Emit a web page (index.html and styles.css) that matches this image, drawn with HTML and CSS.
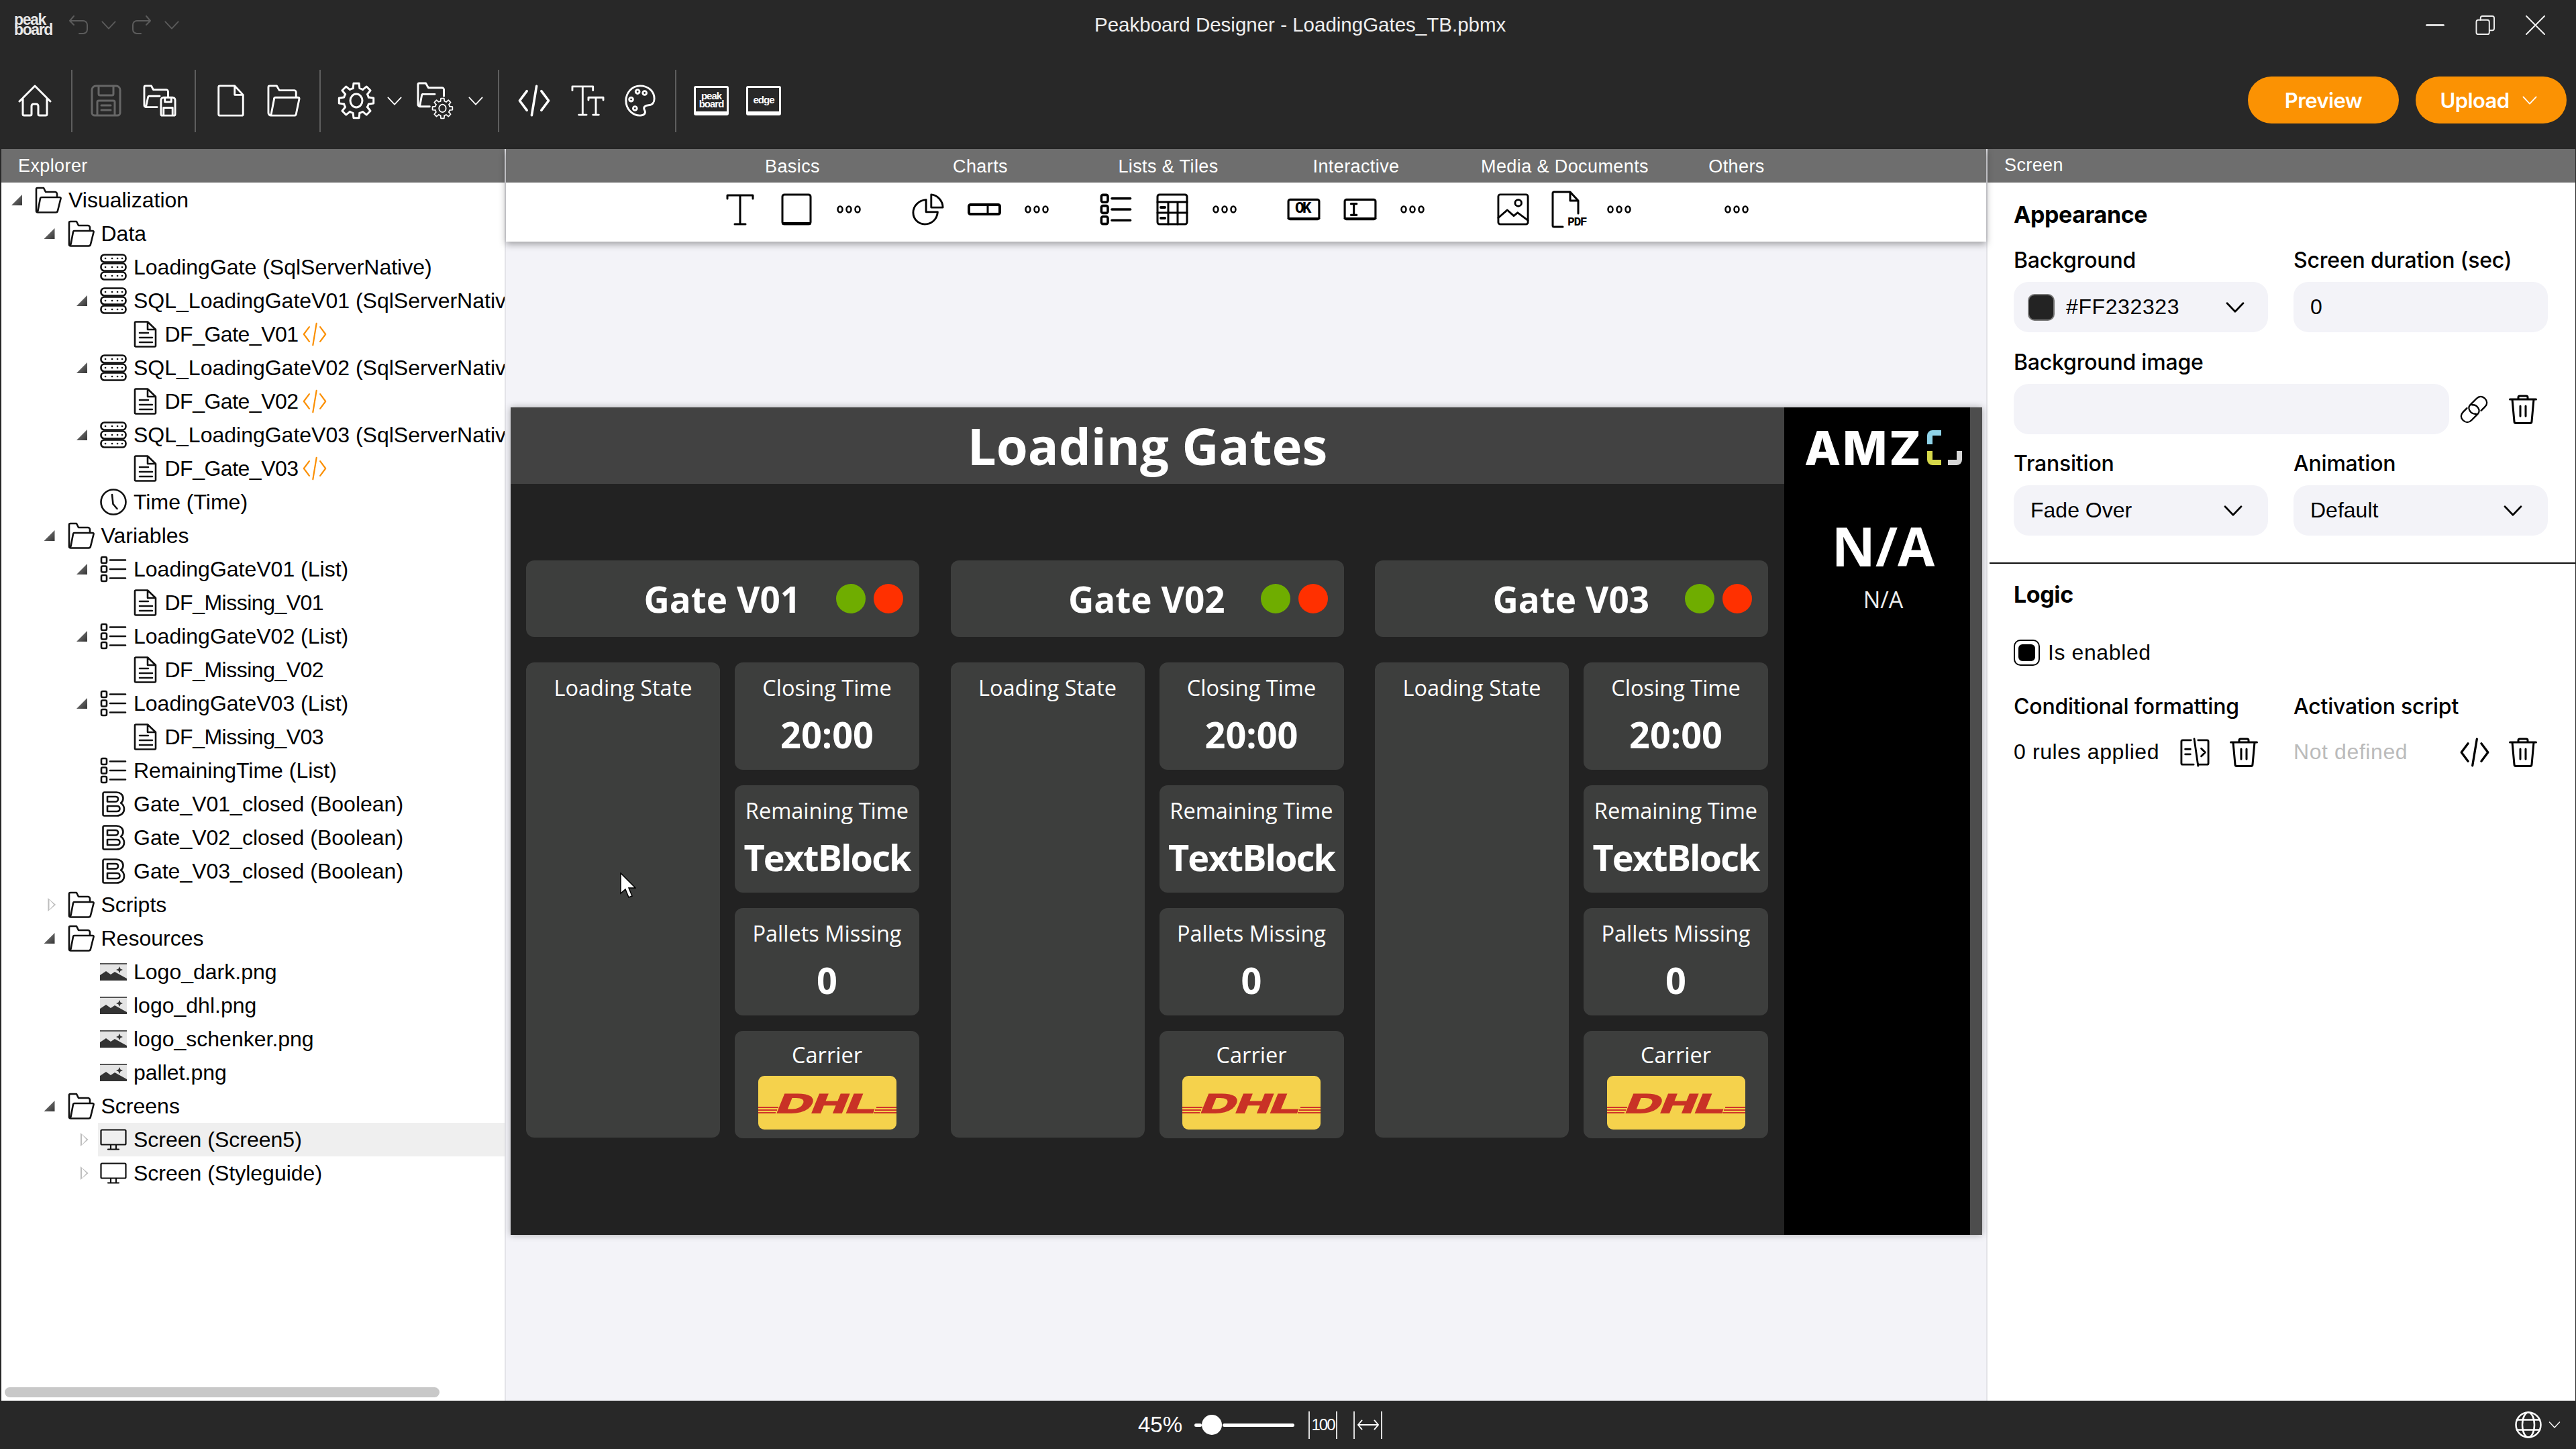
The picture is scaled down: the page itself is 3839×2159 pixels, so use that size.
FILE: index.html
```html
<!DOCTYPE html>
<html lang="en">
<head>
<meta charset="utf-8">
<title>Peakboard Designer</title>
<link rel="stylesheet" href="styles.css">
</head>
<body>
<svg class="defs" width="0" height="0">
  <defs>
    <symbol id="folder" viewBox="0 0 40 40"><path d="M2 36V4a2 2 0 0 1 2-2h9l3 6h14a3 3 0 0 1 3 3v5M2 36a2.500 2.500 0 0 0 2.500 2.500H31a3 3 0 0 0 3-2.500l4.500-18a1.500 1.500 0 0 0-1.500-2H10a2 2 0 0 0-2 1.500L4.500 36"/></symbol>
    <symbol id="db" viewBox="0 0 40 40"><rect x="1.500" y="1.500" width="37" height="11" rx="5"/><rect x="1.500" y="14.500" width="37" height="11" rx="5"/><rect x="1.500" y="27.500" width="37" height="11" rx="5"/><path d="M8 7h.1M18 7h.1M26 7h.1M33 7h.1M8 20h.1M18 20h.1M26 20h.1M33 20h.1M8 33h.1M18 33h.1M26 33h.1M33 33h.1"/></symbol>
    <symbol id="file" viewBox="0 0 40 40"><path d="M5 3a1.500 1.500 0 0 1 1.500-1.500H24L36 13v24a1.500 1.500 0 0 1-1.500 1.500h-28A1.500 1.500 0 0 1 5 37zM24 1.500V13h12M12 18h13M12 25h19M12 32h19"/></symbol>
    <symbol id="clock" viewBox="0 0 40 40"><circle cx="20" cy="20" r="18.500"/><path d="M18 9l1.500 14 6 7"/></symbol>
    <symbol id="list" viewBox="0 0 40 40"><rect x="2" y="2" width="8" height="9" rx="2"/><rect x="2" y="15.500" width="8" height="9" rx="2"/><rect x="2" y="29" width="8" height="9" rx="2"/><path d="M15 6.500h23M15 20h23M15 33.500h23"/></symbol>
    <symbol id="bool" viewBox="0 0 40 40"><path d="M6.500 2.500a2 2 0 0 0-2 2v31a2 2 0 0 0 2 2H25c6 0 11-4 11-10 0-4-2-7-5-9 2-1.500 3.500-4 3.500-7 0-5.500-4.500-9-10-9zM11 9h12c2.500 0 4 1.500 4 3.500S25.500 16.500 23 16.500H11zM11 23h14c3 0 4.500 1.500 4.500 4S28 31 25 31H11z"/></symbol>
    <symbol id="image" viewBox="0 0 40 26"><rect width="40" height="26" fill="#e4e4e4" stroke="none"/><rect width="40" height="2" fill="#555" stroke="none"/><path d="M0 26V18l9-6 7 5 6-4 18 10v3z" fill="#333" stroke="none"/><path d="M29 5l1.500 3.500L34 10l-3.500 1.500L29 15l-1.500-3.500L24 10l3.500-1.500z" fill="#333" stroke="none"/></symbol>
    <symbol id="monitor" viewBox="0 0 40 32"><rect x="1.500" y="1.500" width="37" height="22" rx="1.500"/><path d="M16 24v6M24 24v6M12 30.500h16"/></symbol>
    <symbol id="code" viewBox="0 0 40 40"><path d="M11 8L2 20l9 12M29 8l9 12-9 12M23 2l-6 36"/></symbol>
    <symbol id="chev" viewBox="0 0 24 14"><path d="M1.500 1.500L12 12.500 22.500 1.500"/></symbol>
    <symbol id="home" viewBox="0 0 50 48"><path d="M2 25L25 2l23 23M7 20v24a2 2 0 0 0 2 2h9a2 2 0 0 0 2-2V32a3 3 0 0 1 3-3h4a3 3 0 0 1 3 3v12a2 2 0 0 0 2 2h9a2 2 0 0 0 2-2V20"/></symbol>
    <symbol id="save" viewBox="0 0 46 48"><path d="M2 8a6 6 0 0 1 6-6h30a6 6 0 0 1 6 6v34a4 4 0 0 1-4 4H6a4 4 0 0 1-4-4zM12 2v12a2 2 0 0 0 2 2h18a2 2 0 0 0 2-2V2M10 46V26a2 2 0 0 1 2-2h22a2 2 0 0 1 2 2v20M16 31h14M16 38h14"/></symbol>
    <symbol id="fsave" viewBox="0 0 52 50"><path d="M22 35H5a3 3 0 0 1-3-3V4a2 2 0 0 1 2-2h9l3 6h20a3 3 0 0 1 3 3v9M5 33l3-14a2 2 0 0 1 2-1h16M32 20h14a4 4 0 0 1 4 4v22a2 2 0 0 1-2 2H30a2 2 0 0 1-2-2V24a4 4 0 0 1 4-4zM34 20v7h10v-7M32 48V36h14v12"/></symbol>
    <symbol id="newfile" viewBox="0 0 42 50"><path d="M2 4a2 2 0 0 1 2-2h23l13 14v30a2 2 0 0 1-2 2H4a2 2 0 0 1-2-2zM27 2v14h13"/></symbol>
    <symbol id="open" viewBox="0 0 52 50"><path d="M2 44V4a2 2 0 0 1 2-2h11l4 7h23a3 3 0 0 1 3 3v8M2 44a4 4 0 0 0 4 4h36a3 3 0 0 0 3-2l5-24a2 2 0 0 0-2-2H13a2 2 0 0 0-2 2L6 48"/></symbol>
    <path id="tooth" d="M23.100 9.650L23.930 2.300H32.070L32.900 9.650A19 19 0 0 1 37.500 11.550"/>
    <g id="cog">
      <use href="#tooth"/><use href="#tooth" transform="rotate(45 28 28)"/><use href="#tooth" transform="rotate(90 28 28)"/><use href="#tooth" transform="rotate(135 28 28)"/><use href="#tooth" transform="rotate(180 28 28)"/><use href="#tooth" transform="rotate(225 28 28)"/><use href="#tooth" transform="rotate(270 28 28)"/><use href="#tooth" transform="rotate(315 28 28)"/>
      <ellipse cx="28" cy="28" rx="9" ry="10"/>
    </g>
    <symbol id="gear" viewBox="0 0 56 56"><use href="#cog"/></symbol>
    <symbol id="fgear" viewBox="0 0 58 58"><path d="M20 38H5a3 3 0 0 1-3-3V4a2 2 0 0 1 2-2h10l4 7h21a3 3 0 0 1 3 3v10M5 36l3-16a2 2 0 0 1 2-1h18"/><use href="#cog" transform="translate(23 24) scale(.6)"/></symbol>
    <symbol id="tt" viewBox="0 0 52 50"><path d="M2 9V3h32v6M18 3v44M12 47h12M27 24v-4h23v4M38.500 20v27M34 47h9"/></symbol>
    <symbol id="palette" viewBox="0 0 48 50"><path d="M24 2C11 2 2 13 2 25c0 13 10 23 22 23 7 0 9-4 7-8-3-5 1-8 6-8 6 0 9-4 9-10C46 10 36 2 24 2z"/><circle cx="20" cy="11" r="3"/><circle cx="31" cy="13" r="3"/><circle cx="10" cy="23" r="3"/><circle cx="16" cy="37" r="3"/></symbol>
    <symbol id="undo" viewBox="0 0 30 28"><path d="M8 1L2 8l6 6M2 8h20a6 6 0 0 1 6 6v7a6 6 0 0 1-6 6h-6"/></symbol>
    <symbol id="redo" viewBox="0 0 30 28"><path d="M22 1l6 7-6 6M28 8H8a6 6 0 0 0-6 6v7a6 6 0 0 0 6 6h6"/></symbol>
    <symbol id="t-big" viewBox="0 0 42 48"><path d="M2 8V3h38v5M21 3v43M13 46h16"/></symbol>
    <symbol id="rect" viewBox="0 0 46 48"><path d="M2 5a3 3 0 0 1 3-3h36a3 3 0 0 1 3 3v38a3 3 0 0 1-3 3H5a3 3 0 0 1-3-3z"/><path d="M3 45h40" stroke-width="4"/></symbol>
    <symbol id="dots" viewBox="0 0 36 12"><ellipse cx="5" cy="6" rx="3.500" ry="4.500"/><ellipse cx="18" cy="6" rx="3.500" ry="4.500"/><ellipse cx="31" cy="6" rx="3.500" ry="4.500"/></symbol>
    <symbol id="pie" viewBox="0 0 50 50"><path d="M22 10C10 11 2 20 2 30c0 10 8 18 18 18 10 0 19-7 20-19H22z"/><path d="M30 2c10 1 18 10 18 20H30z"/></symbol>
    <symbol id="toggle" viewBox="0 0 50 18"><rect x="2" y="2" width="46" height="14" rx="2.500" stroke-width="4"/><path d="M30 2v14"/></symbol>
    <symbol id="table" viewBox="0 0 48 48"><rect x="2" y="2" width="44" height="44" rx="3"/><path d="M2 13h44M2 29h44M18 13v33M32 13v33"/><path d="M7 21h6M7 37h6" stroke-width="4"/></symbol>
    <symbol id="okbox" viewBox="0 0 48 32"><rect x="2" y="2" width="44" height="28" rx="2.500"/><path d="M2 29h44" stroke-width="3"/></symbol>
    <symbol id="inbox" viewBox="0 0 48 32"><rect x="2" y="2" width="44" height="28" rx="2.500"/><path d="M2 29h44" stroke-width="3"/><path d="M11 8h8M15 8v16M11 24h8" stroke-width="3"/></symbol>
    <symbol id="picture" viewBox="0 0 50 50"><rect x="2" y="2" width="46" height="46" rx="3"/><circle cx="33" cy="15" r="5"/><path d="M2 38l14-12 10 9 6-5 16 12"/></symbol>
    <symbol id="pdf" viewBox="0 0 50 56"><path d="M17 54H4a2 2 0 0 1-2-2V4a2 2 0 0 1 2-2h24l12 13v19M28 2v13h12"/></symbol>
    <symbol id="link" viewBox="0 0 46 46"><path d="M20 16a10 10 0 0 1 9 4c3 4 2 8 0 10L19 40c-4 4-9 4-13 0s-4-9 0-13l6-6M26 30a10 10 0 0 1-9-4c-3-4-2-8 0-10L27 6c4-4 9-4 13 0s4 9 0 13l-6 6"/></symbol>
    <symbol id="trash" viewBox="0 0 42 44"><path d="M1.500 7h39M14 7V4a2 2 0 0 1 2-2h10a2 2 0 0 1 2 2v3M5 7l3 33a2.500 2.500 0 0 0 2.500 2.500h21A2.500 2.500 0 0 0 34 40l3-33M17 17v15M25 17v15"/></symbol>
    <symbol id="rules" viewBox="0 0 46 44"><path d="M17 3H4a2 2 0 0 0-2 2v34a2 2 0 0 0 2 2h17M28 3h14a2 2 0 0 1 2 2v34a2 2 0 0 1-2 2H29M22 1l6 42M8 17h8M8 25h8M33 16l6 6-6 6"/></symbol>
    <symbol id="globe" viewBox="0 0 40 40"><circle cx="20" cy="20" r="18.500"/><ellipse cx="20" cy="20" rx="9" ry="18.500"/><path d="M3 12.500h34M3 27.500h34"/></symbol>
    <symbol id="arrows" viewBox="0 0 36 20"><path d="M8 3l-6 7 6 7M2 10h32M28 3l6 7-6 7"/></symbol>
    <symbol id="restore" viewBox="0 0 30 30"><rect x="1.500" y="7" width="20" height="22" rx="3"/><path d="M8 7V4a3 3 0 0 1 3-3h15a3 3 0 0 1 3 3v16a3 3 0 0 1-3 3h-4"/></symbol>
    <symbol id="close" viewBox="0 0 28 28"><path d="M1 1l26 26M27 1L1 27"/></symbol>
  </defs>
</svg>

<div class="app">
  <header class="titlebar">
    <div class="tb-left">
      <div class="logo">peak<br>board</div>
      <svg class="ic muted undo"><use href="#undo"/></svg>
      <svg class="ic muted mini"><use href="#chev"/></svg>
      <svg class="ic muted undo"><use href="#redo"/></svg>
      <svg class="ic muted mini"><use href="#chev"/></svg>
    </div>
    <div class="doc-title">Peakboard Designer - LoadingGates_TB.pbmx</div>
    <div class="win-controls">
      <span class="win-min"></span>
      <svg class="ic win-ic"><use href="#restore"/></svg>
      <svg class="ic win-ic thin"><use href="#close"/></svg>
    </div>
  </header>

  <div class="toolbar">
    <div class="tools">
      <svg class="ic t48"><use href="#home"/></svg>
      <i class="sep"></i>
      <svg class="ic t48 dim"><use href="#save"/></svg>
      <svg class="ic t48"><use href="#fsave"/></svg>
      <i class="sep"></i>
      <svg class="ic t48"><use href="#newfile"/></svg>
      <svg class="ic t48"><use href="#open"/></svg>
      <i class="sep"></i>
      <svg class="ic t56"><use href="#gear"/></svg>
      <svg class="ic mini thin"><use href="#chev"/></svg>
      <svg class="ic t56"><use href="#fgear"/></svg>
      <svg class="ic mini thin"><use href="#chev"/></svg>
      <i class="sep"></i>
      <svg class="ic t48"><use href="#code"/></svg>
      <svg class="ic t48"><use href="#tt"/></svg>
      <svg class="ic t48"><use href="#palette"/></svg>
      <i class="sep"></i>
      <div class="brandbox">peak<br>board</div>
      <div class="brandbox">edge</div>
    </div>
    <div class="actions">
      <div class="pill">Preview</div>
      <div class="pill upload">Upload<svg class="ic pill-chev"><use href="#chev"/></svg></div>
    </div>
  </div>

  <main class="main">
    <aside class="explorer">
      <div class="band">Explorer</div>
      <div class="tree">
        <div class="row l0"><i class="tri open"></i><div class="cell"><svg class="ic ti"><use href="#folder"/></svg><span>Visualization</span></div></div>
        <div class="row l1"><i class="tri open"></i><div class="cell"><svg class="ic ti"><use href="#folder"/></svg><span>Data</span></div></div>
        <div class="row l2"><i class="tri none"></i><div class="cell"><svg class="ic ti"><use href="#db"/></svg><span>LoadingGate (SqlServerNative)</span></div></div>
        <div class="row l2"><i class="tri open"></i><div class="cell"><svg class="ic ti"><use href="#db"/></svg><span>SQL_LoadingGateV01 (SqlServerNative)</span></div></div>
        <div class="row l3"><i class="tri none"></i><div class="cell"><svg class="ic ti"><use href="#file"/></svg><span>DF_Gate_V01</span><svg class="ic tag"><use href="#code"/></svg></div></div>
        <div class="row l2"><i class="tri open"></i><div class="cell"><svg class="ic ti"><use href="#db"/></svg><span>SQL_LoadingGateV02 (SqlServerNative)</span></div></div>
        <div class="row l3"><i class="tri none"></i><div class="cell"><svg class="ic ti"><use href="#file"/></svg><span>DF_Gate_V02</span><svg class="ic tag"><use href="#code"/></svg></div></div>
        <div class="row l2"><i class="tri open"></i><div class="cell"><svg class="ic ti"><use href="#db"/></svg><span>SQL_LoadingGateV03 (SqlServerNative)</span></div></div>
        <div class="row l3"><i class="tri none"></i><div class="cell"><svg class="ic ti"><use href="#file"/></svg><span>DF_Gate_V03</span><svg class="ic tag"><use href="#code"/></svg></div></div>
        <div class="row l2"><i class="tri none"></i><div class="cell"><svg class="ic ti"><use href="#clock"/></svg><span>Time (Time)</span></div></div>
        <div class="row l1"><i class="tri open"></i><div class="cell"><svg class="ic ti"><use href="#folder"/></svg><span>Variables</span></div></div>
        <div class="row l2"><i class="tri open"></i><div class="cell"><svg class="ic ti"><use href="#list"/></svg><span>LoadingGateV01 (List)</span></div></div>
        <div class="row l3"><i class="tri none"></i><div class="cell"><svg class="ic ti"><use href="#file"/></svg><span>DF_Missing_V01</span></div></div>
        <div class="row l2"><i class="tri open"></i><div class="cell"><svg class="ic ti"><use href="#list"/></svg><span>LoadingGateV02 (List)</span></div></div>
        <div class="row l3"><i class="tri none"></i><div class="cell"><svg class="ic ti"><use href="#file"/></svg><span>DF_Missing_V02</span></div></div>
        <div class="row l2"><i class="tri open"></i><div class="cell"><svg class="ic ti"><use href="#list"/></svg><span>LoadingGateV03 (List)</span></div></div>
        <div class="row l3"><i class="tri none"></i><div class="cell"><svg class="ic ti"><use href="#file"/></svg><span>DF_Missing_V03</span></div></div>
        <div class="row l2"><i class="tri none"></i><div class="cell"><svg class="ic ti"><use href="#list"/></svg><span>RemainingTime (List)</span></div></div>
        <div class="row l2"><i class="tri none"></i><div class="cell"><svg class="ic ti"><use href="#bool"/></svg><span>Gate_V01_closed (Boolean)</span></div></div>
        <div class="row l2"><i class="tri none"></i><div class="cell"><svg class="ic ti"><use href="#bool"/></svg><span>Gate_V02_closed (Boolean)</span></div></div>
        <div class="row l2"><i class="tri none"></i><div class="cell"><svg class="ic ti"><use href="#bool"/></svg><span>Gate_V03_closed (Boolean)</span></div></div>
        <div class="row l1"><i class="tri shut"></i><div class="cell"><svg class="ic ti"><use href="#folder"/></svg><span>Scripts</span></div></div>
        <div class="row l1"><i class="tri open"></i><div class="cell"><svg class="ic ti"><use href="#folder"/></svg><span>Resources</span></div></div>
        <div class="row l2"><i class="tri none"></i><div class="cell"><svg class="ic ti-img"><use href="#image"/></svg><span>Logo_dark.png</span></div></div>
        <div class="row l2"><i class="tri none"></i><div class="cell"><svg class="ic ti-img"><use href="#image"/></svg><span>logo_dhl.png</span></div></div>
        <div class="row l2"><i class="tri none"></i><div class="cell"><svg class="ic ti-img"><use href="#image"/></svg><span>logo_schenker.png</span></div></div>
        <div class="row l2"><i class="tri none"></i><div class="cell"><svg class="ic ti-img"><use href="#image"/></svg><span>pallet.png</span></div></div>
        <div class="row l1"><i class="tri open"></i><div class="cell"><svg class="ic ti"><use href="#folder"/></svg><span>Screens</span></div></div>
        <div class="row l2"><i class="tri shut"></i><div class="cell selected"><svg class="ic ti-mon"><use href="#monitor"/></svg><span>Screen (Screen5)</span></div></div>
        <div class="row l2"><i class="tri shut"></i><div class="cell"><svg class="ic ti-mon"><use href="#monitor"/></svg><span>Screen (Styleguide)</span></div></div>
      </div>
      <div class="hscroll"><div class="hthumb"></div></div>
    </aside>

    <section class="center">
      <div class="toolbox">
        <div class="tgroup g1">
          <div class="tg-title">Basics</div>
          <div class="tg-items">
            <svg class="ic bx"><use href="#t-big"/></svg>
            <svg class="ic bx"><use href="#rect"/></svg>
            <svg class="ic bdots"><use href="#dots"/></svg>
          </div>
        </div>
        <div class="tgroup">
          <div class="tg-title">Charts</div>
          <div class="tg-items">
            <svg class="ic bx"><use href="#pie"/></svg>
            <div class="bxwrap"><svg class="ic small-box"><use href="#toggle"/></svg></div>
            <svg class="ic bdots"><use href="#dots"/></svg>
          </div>
        </div>
        <div class="tgroup">
          <div class="tg-title">Lists &amp; Tiles</div>
          <div class="tg-items">
            <svg class="ic bx"><use href="#list"/></svg>
            <svg class="ic bx"><use href="#table"/></svg>
            <svg class="ic bdots"><use href="#dots"/></svg>
          </div>
        </div>
        <div class="tgroup">
          <div class="tg-title">Interactive</div>
          <div class="tg-items">
            <div class="bxwrap"><svg class="ic small-box"><use href="#okbox"/></svg><span class="oktext">OK</span></div>
            <div class="bxwrap"><svg class="ic small-box"><use href="#inbox"/></svg></div>
            <svg class="ic bdots"><use href="#dots"/></svg>
          </div>
        </div>
        <div class="tgroup media">
          <div class="tg-title">Media &amp; Documents</div>
          <div class="tg-items">
            <svg class="ic bx"><use href="#picture"/></svg>
            <div class="bxwrap"><svg class="ic pdf-ic"><use href="#pdf"/></svg><span class="pdftext">PDF</span></div>
            <svg class="ic bdots"><use href="#dots"/></svg>
          </div>
        </div>
        <div class="tgroup others">
          <div class="tg-title">Others</div>
          <div class="tg-items">
            <svg class="ic bdots"><use href="#dots"/></svg>
          </div>
        </div>
      </div>

      <div class="canvas">
        <div class="screen">
          <div class="board">
            <div class="board-title">Loading Gates</div>
            <div class="gates">
              <div class="gate">
                <div class="gate-head"><span class="gate-name">Gate V01</span><i class="dot green"></i><i class="dot red"></i></div>
                <div class="gate-body">
                  <div class="card tall"><div class="c-label">Loading State</div></div>
                  <div class="stack">
                    <div class="card"><div class="c-label">Closing Time</div><div class="c-value">20:00</div></div>
                    <div class="card"><div class="c-label">Remaining Time</div><div class="c-value tight">TextBlock</div></div>
                    <div class="card"><div class="c-label">Pallets Missing</div><div class="c-value">0</div></div>
                    <div class="card"><div class="c-label small">Carrier</div><svg class="dhl" viewBox="0 0 206 80"><rect width="206" height="80" rx="9" fill="#f5d24c"/><path d="M0 47h30M0 51h28M0 55h26M176 47h30M174 51h32M172 55h34" stroke="#d0352a" stroke-width="2"/><text x="0" y="55" transform="skewX(-22) translate(47 0)" textLength="147" lengthAdjust="spacingAndGlyphs" class="dhl-text">DHL</text></svg></div>
                  </div>
                </div>
              </div>
              <div class="gate">
                <div class="gate-head"><span class="gate-name">Gate V02</span><i class="dot green"></i><i class="dot red"></i></div>
                <div class="gate-body">
                  <div class="card tall"><div class="c-label">Loading State</div></div>
                  <div class="stack">
                    <div class="card"><div class="c-label">Closing Time</div><div class="c-value">20:00</div></div>
                    <div class="card"><div class="c-label">Remaining Time</div><div class="c-value tight">TextBlock</div></div>
                    <div class="card"><div class="c-label">Pallets Missing</div><div class="c-value">0</div></div>
                    <div class="card"><div class="c-label small">Carrier</div><svg class="dhl" viewBox="0 0 206 80"><rect width="206" height="80" rx="9" fill="#f5d24c"/><path d="M0 47h30M0 51h28M0 55h26M176 47h30M174 51h32M172 55h34" stroke="#d0352a" stroke-width="2"/><text x="0" y="55" transform="skewX(-22) translate(47 0)" textLength="147" lengthAdjust="spacingAndGlyphs" class="dhl-text">DHL</text></svg></div>
                  </div>
                </div>
              </div>
              <div class="gate">
                <div class="gate-head"><span class="gate-name">Gate V03</span><i class="dot green"></i><i class="dot red"></i></div>
                <div class="gate-body">
                  <div class="card tall"><div class="c-label">Loading State</div></div>
                  <div class="stack">
                    <div class="card"><div class="c-label">Closing Time</div><div class="c-value">20:00</div></div>
                    <div class="card"><div class="c-label">Remaining Time</div><div class="c-value tight">TextBlock</div></div>
                    <div class="card"><div class="c-label">Pallets Missing</div><div class="c-value">0</div></div>
                    <div class="card"><div class="c-label small">Carrier</div><svg class="dhl" viewBox="0 0 206 80"><rect width="206" height="80" rx="9" fill="#f5d24c"/><path d="M0 47h30M0 51h28M0 55h26M176 47h30M174 51h32M172 55h34" stroke="#d0352a" stroke-width="2"/><text x="0" y="55" transform="skewX(-22) translate(47 0)" textLength="147" lengthAdjust="spacingAndGlyphs" class="dhl-text">DHL</text></svg></div>
                  </div>
                </div>
              </div>
            </div>
          </div>
          <div class="side">
            <div class="amz"><span>AMZ</span><svg class="amz-mark" viewBox="0 0 52 52"><path d="M21 0H8a8 8 0 0 0-8 8v13h8V8h13z" fill="#8fd3e8"/><path d="M0 31v13a8 8 0 0 0 8 8h13v-8H8V31z" fill="#d6d84a"/><path d="M52 31v13a8 8 0 0 1-8 8H31v-8h13V31z" fill="#d6d6d6"/></svg></div>
            <div class="na-big">N/A</div>
            <div class="na-small">N/A</div>
            <div class="side-strip"></div>
          </div>
          <svg class="cursor" viewBox="0 0 24 38"><path d="M1 1v30l7-6 5 12 5-2-5-12h10z" fill="#fff" stroke="#000" stroke-width="1.500"/></svg>
        </div>
      </div>
    </section>

    <aside class="props">
      <div class="band props-band">Screen</div>
      <div class="pane">
        <h2 class="sec-title">Appearance</h2>
        <div class="two">
          <div><div class="f-label">Background</div>
            <div class="input swatch-input"><i class="swatch"></i><span class="grow spaced">#FF232323</span><svg class="ic sel-chev wide"><use href="#chev"/></svg></div></div>
          <div><div class="f-label">Screen duration (sec)</div><div class="input">0</div></div>
        </div>
        <div class="f-label after">Background image</div>
        <div class="img-row">
          <div class="input flex1"></div>
          <svg class="ic act link"><use href="#link"/></svg>
          <svg class="ic act trash"><use href="#trash"/></svg>
        </div>
        <div class="two top24">
          <div><div class="f-label">Transition</div><div class="input"><span class="grow">Fade Over</span><svg class="ic sel-chev"><use href="#chev"/></svg></div></div>
          <div><div class="f-label">Animation</div><div class="input"><span class="grow">Default</span><svg class="ic sel-chev"><use href="#chev"/></svg></div></div>
        </div>
      </div>
      <div class="divider"></div>
      <div class="pane logic">
        <h2 class="sec-title">Logic</h2>
        <div class="check-row"><i class="check"></i><span class="spaced">Is enabled</span></div>
        <div class="two cond">
          <div><div class="f-label">Conditional formatting</div>
            <div class="plain"><span class="grow spaced">0 rules applied</span><svg class="ic act rules"><use href="#rules"/></svg><svg class="ic act trash"><use href="#trash"/></svg></div></div>
          <div><div class="f-label">Activation script</div>
            <div class="plain"><span class="grow spaced muted-text">Not defined</span><svg class="ic act codeic"><use href="#code"/></svg><svg class="ic act trash"><use href="#trash"/></svg></div></div>
        </div>
      </div>
    </aside>
  </main>

  <footer class="status">
    <span class="zoom-val">45%</span>
    <div class="slider"><i class="seg short"></i><i class="thumb"></i><i class="seg"></i></div>
    <div class="bars">100</div>
    <div class="bars"><svg class="ic arrows"><use href="#arrows"/></svg></div>
    <div class="lang"><svg class="ic globe"><use href="#globe"/></svg><svg class="ic mini thin"><use href="#chev"/></svg></div>
  </footer>
</div>
</body>
</html>
```

FILE: styles.css
```css
* { box-sizing: border-box; }
html, body { margin: 0; padding: 0; background: #282828; }
body { font-family: "Liberation Sans", Arial, sans-serif; font-size: 32px; color: #000; }
.defs { position: absolute; }
.app { width: 3839px; height: 2159px; display: flex; flex-direction: column; overflow: hidden; background: #282828; }
.ic { fill: none; stroke: currentColor; stroke-width: 3; stroke-linecap: round; stroke-linejoin: round; display: block; flex: none; }
.thin { stroke-width: 2; }

/* title bar */
.titlebar { height: 74px; display: flex; align-items: center; color: #fff; }
.tb-left { width: 1631px; display: flex; align-items: center; padding-left: 21px; }
.logo { font-weight: 700; font-size: 23px; line-height: 15px; letter-spacing: -1.400px; width: 81px; color: #e8e8e8; }
.muted { color: #5c5c5c; stroke-width: 2; }
.undo { width: 30px; height: 28px; margin-right: 19px; }
.mini { width: 22px; height: 13px; }
.tb-left .mini { margin-right: 23px; }
.doc-title { font-size: 29.500px; color: #eee; white-space: nowrap; }
.win-controls { margin-left: auto; display: flex; align-items: center; gap: 46px; padding-right: 46px; }
.win-min { width: 28px; height: 3px; background: #ddd; border-radius: 2px; }
.win-ic { width: 29px; height: 29px; stroke-width: 2; color: #eee; }

/* tool bar */
.toolbar { height: 148px; display: flex; color: #fff; align-items: stretch; }
.tools { display: grid; grid-template-columns: 104px 6px 96px 64px 41px 66px 92px 16px 92px 22px 100px 20px 48px 58px 102px 54px 52px 54px 102px; justify-items: center; align-items: center; height: 110px; align-self: flex-start; margin-top: 21px; }
.t48 { width: 50px; height: 48px; }
.t56 { width: 56px; height: 56px; }
.dim { color: #666; }
.sep { display: block; width: 2px; height: 93px; background: #5e5e5e; }
.brandbox { width: 52px; height: 44px; border: 3px solid #fff; border-bottom-width: 6px; border-radius: 3px; font-weight: 700; font-size: 15px; line-height: 12px; letter-spacing: -1px; display: flex; align-items: center; justify-content: center; text-align: center; color: #fff; }
.actions { margin-left: auto; display: flex; gap: 25px; padding: 40px 14px 0 0; }
.pill { width: 225px; height: 70px; border-radius: 35px; background: #fb9203; color: #fff; font-family: Inter, sans-serif; font-weight: 600; font-size: 31px; letter-spacing: -.6px; display: flex; align-items: center; justify-content: center; }
.upload { padding-right: 8px; }
.pill-chev { width: 22px; height: 13px; margin-left: 19px; stroke-width: 2; }

/* main */
.main { flex: 1; display: flex; padding-left: 2px; padding-right: 1px; min-height: 0; }
.band { height: 50px; background: #6e6e6e; color: #fff; font-size: 27px; line-height: 50px; padding-left: 25px; letter-spacing: .4px; }

/* explorer */
.explorer { width: 752px; background: #fff; display: flex; flex-direction: column; flex: none; border-right: 2px solid #e3e3e8; }
.tree { flex: 1; padding-top: 1px; overflow: hidden; }
.row { height: 50px; display: flex; align-items: center; white-space: nowrap; }
.l0 { padding-left: 15px; }
.l1 { padding-left: 63.500px; }
.l2 { padding-left: 112px; }
.l3 { padding-left: 158.500px; letter-spacing: -.5px; }
.tri { display: block; width: 16px; height: 16px; margin-right: 16px; flex: none; }
.tri.open { background: linear-gradient(135deg, #888, #333); clip-path: polygon(100% 0, 100% 100%, 0 100%); }
.tri.shut { height: 20px; margin-left: 4px; margin-right: 12px; background: #bdbdbd; clip-path: polygon(12% 0, 85% 50%, 12% 100%, 12% 0, 25% 13%, 25% 87%, 68% 50%, 25% 13%); }
.cell { flex: 1; min-width: 0; height: 50px; display: flex; align-items: center; padding-left: 3px; overflow: hidden; }
.cell.selected { background: #efefef; }
.ti, .ti-img, .ti-mon { width: 40px; margin-right: 10px; color: #111; }
.ti { height: 40px; stroke-width: 2.600; }
.ti-img { height: 26px; }
.ti-mon { height: 32px; stroke-width: 2.200; }
.tag { width: 36px; height: 36px; margin-left: 6px; color: #fb8f00; stroke-width: 2.400; }
.hscroll { height: 35px; padding: 15px 0 0 5px; }
.hthumb { width: 648px; height: 15px; border-radius: 8px; background: #c8c8c8; }

/* center */
.center { width: 2208px; flex: none; display: flex; flex-direction: column; background: #f3f3f8; border-right: 2px solid #e3e3e8; }
.toolbox { height: 138px; display: flex; padding-left: 319px; position: relative; z-index: 1; background: linear-gradient(#6e6e6e 0 50px, #fff 50px); box-shadow: 0 4px 10px rgba(0,0,0,.35); }
.tgroup { display: flex; flex-direction: column; width: 216px; margin-right: 64px; }
.tgroup.media { margin-left: 32px; margin-right: 125px; width: 214px; }
.tgroup.others { width: 48px; margin-right: 0; }
.tg-title { height: 50px; line-height: 52px; color: #fff; font-size: 27px; letter-spacing: .4px; white-space: nowrap; display: flex; justify-content: center; }
.tg-items { height: 88px; display: flex; align-items: center; gap: 24px; color: #000; padding-bottom: 8px; }
.media .tg-items { gap: 22px; }
.bx { width: 60px; height: 48px; }
.bdots { width: 48px; height: 12px; stroke-width: 2.500; }
.bxwrap { position: relative; width: 60px; height: 48px; display: flex; align-items: center; justify-content: center; flex: none; }
.small-box { width: 50px; height: 34px; }
.pdf-ic { width: 50px; height: 56px; }
.oktext { position: absolute; font-family: "Liberation Mono", monospace; font-weight: 700; font-size: 23px; letter-spacing: -3px; left: 17px; top: 10px; }
.pdftext { position: absolute; right: 3px; bottom: -5px; font-family: "Liberation Mono", monospace; font-weight: 700; font-size: 18px; letter-spacing: -1.500px; }

.canvas { flex: 1; min-height: 0; padding: 247px 0 0 7px; }
.screen { position: relative; width: 2193px; height: 1233px; display: flex; background: #222; box-shadow: 0 0 10px rgba(0,0,0,.3); font-family: "Open Sans", sans-serif; color: #fff; }
.board { width: 1898px; flex: none; }
.board-title { height: 114px; background: #424242; text-align: center; font-weight: 700; font-size: 76px; line-height: 114px; }
.gates { display: flex; gap: 46.500px; padding: 114px 0 0 23px; }
.gate { width: 586px; }
.gate-head { height: 114px; background: #3d3e3d; border-radius: 12px; display: flex; align-items: center; justify-content: flex-end; padding-right: 24px; }
.gate-name { font-weight: 700; font-size: 53px; margin-right: 53px; }
.dot { width: 44px; height: 44px; border-radius: 50%; }
.green { background: #6fad00; margin-right: 12px; }
.red { background: #ff3000; }
.gate-body { display: flex; gap: 22px; margin-top: 38px; }
.card { background: #3d3e3d; border-radius: 12px; height: 160px; display: flex; flex-direction: column; align-items: center; }
.card.tall { width: 289px; height: 708px; }
.stack { width: 275px; display: flex; flex-direction: column; gap: 23px; }
.c-label { height: 75px; line-height: 75px; font-size: 32.500px; white-space: nowrap; }
.c-label.small { height: 67px; line-height: 72px; }
.c-value { height: 64px; line-height: 64px; font-weight: 700; font-size: 54px; white-space: nowrap; }
.c-value.tight { letter-spacing: -1.900px; }
.dhl { width: 206px; height: 80px; display: block; }
.dhl-text { font-family: "Liberation Sans", sans-serif; font-weight: 700; font-size: 40px; fill: #c93226; stroke: #c93226; stroke-width: 2; }
.side { flex: 1; position: relative; background: #000; display: flex; flex-direction: column; align-items: center; }
.side-strip { position: absolute; right: 0; top: 0; bottom: 0; width: 18px; background: #4d4d4d; }
.amz { height: 120px; display: flex; align-items: center; gap: 6px; font-family: Inter, sans-serif; font-weight: 800; font-size: 70px; letter-spacing: 3px; }
.amz-mark { width: 52px; height: 52px; }
.na-big { margin-top: 36px; height: 100px; line-height: 100px; font-weight: 700; font-size: 80px; }
.na-small { height: 60px; line-height: 60px; font-size: 34px; color: #eee; }
.cursor { position: absolute; left: 163px; top: 693px; width: 24px; height: 38px; }

/* properties */
.props { flex: 1; background: #fff; min-width: 0; }
.props-band { line-height: 48px; }
.pane { padding: 28px 40px 0 39px; }
.sec-title { margin: 0 0 28px; height: 40px; line-height: 40px; font-family: Inter, sans-serif; font-weight: 700; font-size: 34px; letter-spacing: -.4px; }
.two { display: grid; grid-template-columns: 379px 379px; gap: 38px; }
.f-label { height: 40px; line-height: 40px; margin-bottom: 12px; font-family: Inter, sans-serif; font-weight: 500; font-size: 32px; letter-spacing: -.2px; white-space: nowrap; }
.f-label.after { margin-top: 25px; }
.input { height: 75px; background: #f3f3f8; border-radius: 22px; display: flex; align-items: center; padding: 0 25px; }
.swatch-input { padding: 0 24px 0 21px; }
.swatch { width: 40px; height: 40px; background: #232323; border: 2px solid #777; border-radius: 10px; margin-right: 17px; flex: none; }
.grow { flex: 1; white-space: nowrap; }
.spaced { letter-spacing: .6px; }
.sel-chev { width: 28px; height: 16px; stroke-width: 2.400; margin-right: 13px; }
.sel-chev.wide { margin-right: 11px; }
.img-row { display: flex; align-items: center; }
.flex1 { width: 649px; flex: none; }
.act { height: 44px; }
.link { width: 44px; margin-left: 15px; stroke-width: 2.500; }
.trash { width: 42px; margin-left: 30px; }
.top24 { margin-top: 24px; }
.divider { height: 2px; background: #111; margin: 40px 0 0 3px; }
.logic { padding-top: 26px; }
.check-row { display: flex; align-items: center; gap: 12px; height: 39px; margin-top: 47px; }
.logic .sec-title { margin-bottom: 0; }
.check { width: 39px; height: 39px; border: 2px solid #000; border-radius: 10px; display: flex; align-items: center; justify-content: center; }
.check::after { content: ""; width: 25px; height: 25px; background: #000; border-radius: 6px; }
.cond { margin-top: 41px; }
.cond .f-label { margin-bottom: 10px; }
.plain { height: 75px; display: flex; align-items: center; }
.rules { width: 44px; }
.plain .rules + .trash { margin-left: 30px; margin-right: 15px; }
.codeic { width: 46px; }
.plain .codeic + .trash { margin-left: 28px; margin-right: 16px; }
.muted-text { color: #bbb; }

/* status bar */
.status { height: 72px; display: flex; align-items: center; color: #fff; padding-left: 1696px; }
.zoom-val { font-size: 33px; width: 84px; }
.slider { width: 149px; display: flex; align-items: center; }
.seg { flex: 1; height: 5px; background: #fff; border-radius: 3px; }
.seg.short { flex: none; width: 11px; }
.thumb { width: 30px; height: 30px; background: #fff; border-radius: 50%; flex: none; margin-right: 1px; }
.bars { width: 43px; height: 41px; border-left: 2px solid #ddd; border-right: 2px solid #ddd; margin-left: 21px; display: flex; align-items: center; justify-content: center; font-size: 24px; letter-spacing: -2px; }
.bars + .bars { margin-left: 24px; }
.arrows { width: 34px; height: 20px; stroke-width: 2; }
.lang { margin-left: auto; display: flex; align-items: center; gap: 10px; padding-right: 23px; }
.globe { width: 40px; height: 40px; stroke-width: 2.500; }
.status .mini { width: 18px; height: 10px; }
```
